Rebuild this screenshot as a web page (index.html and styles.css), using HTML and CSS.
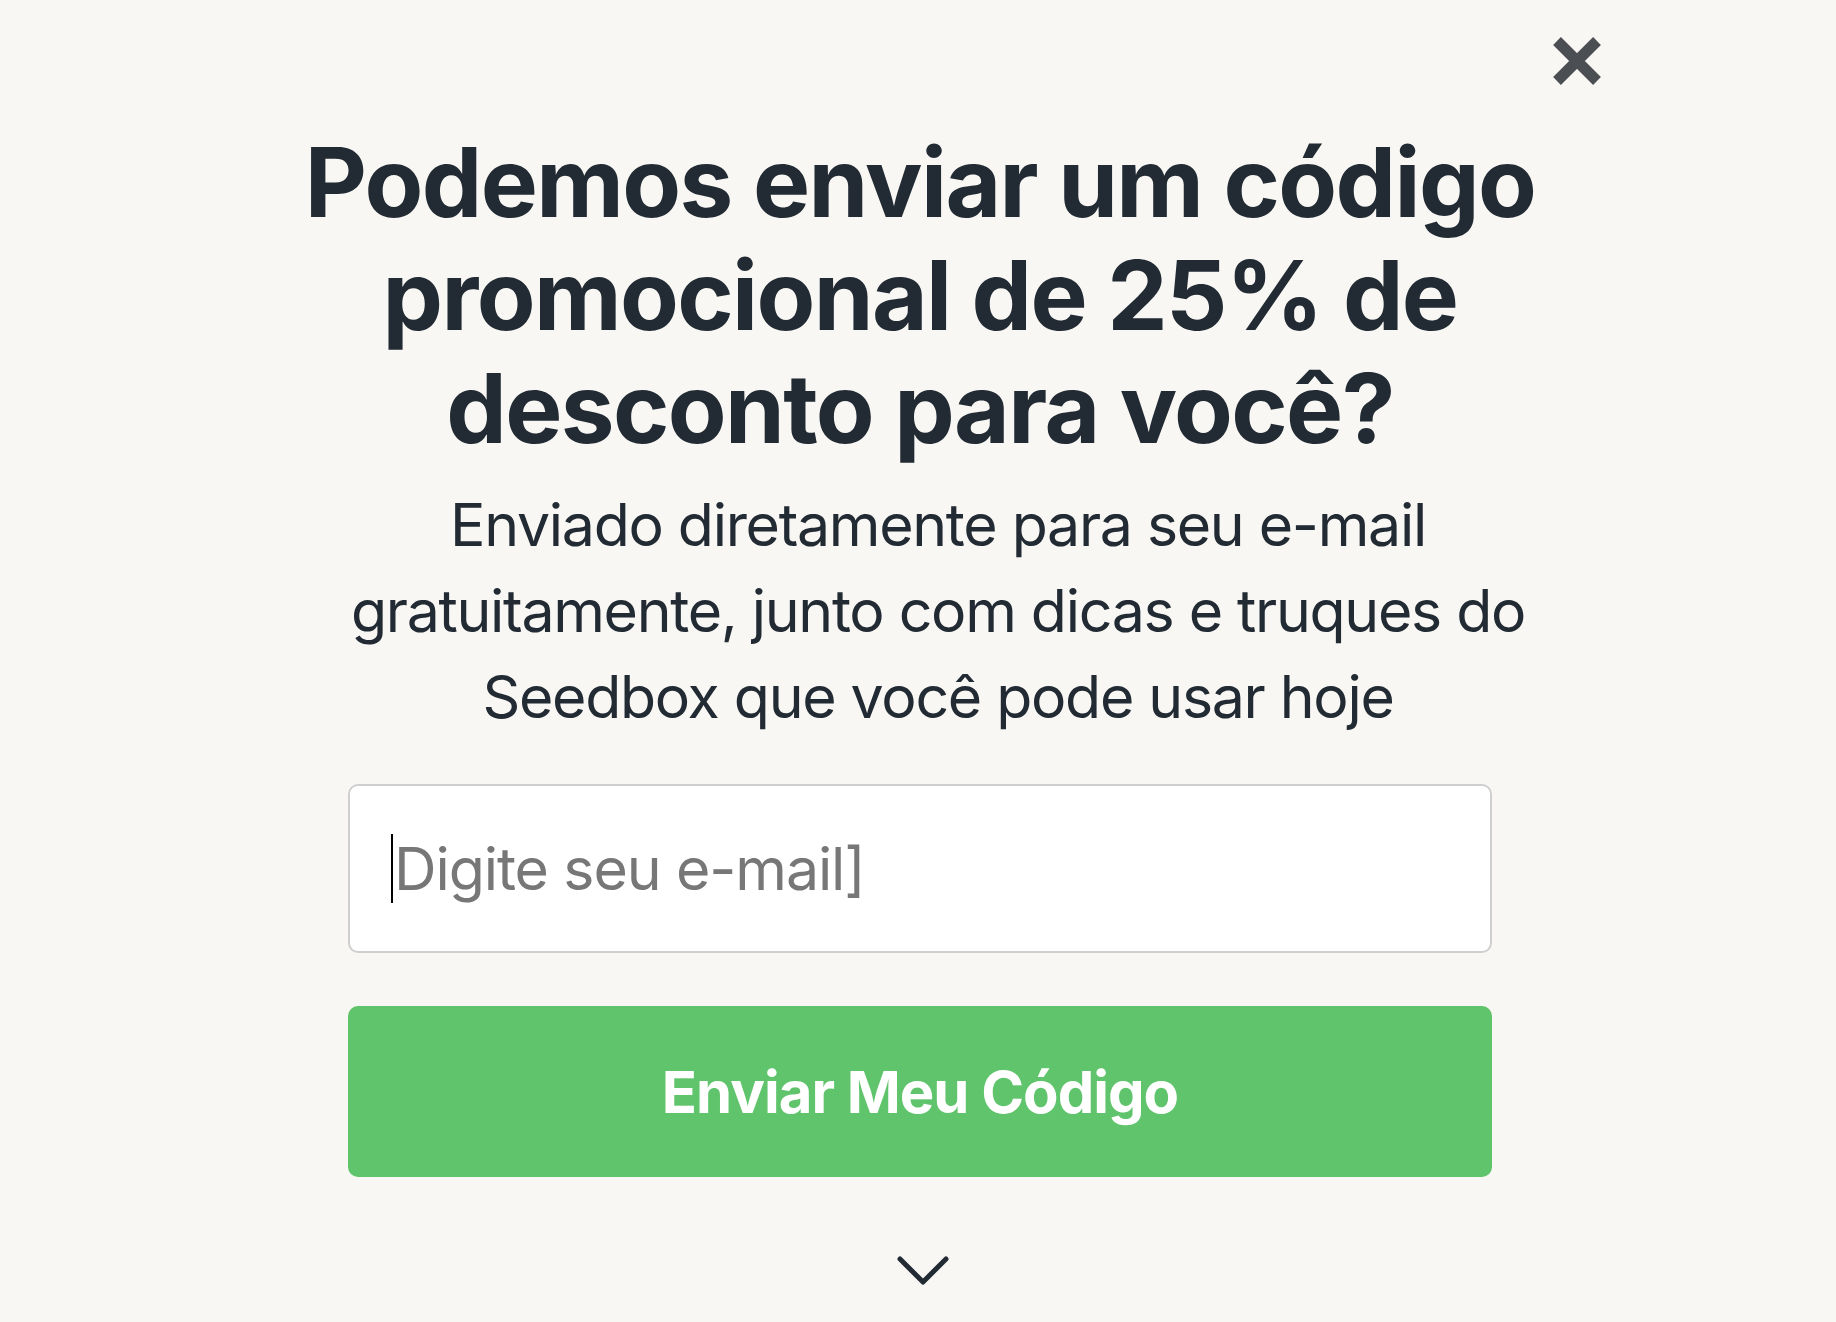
FILE: index.html
```html
<!DOCTYPE html>
<html lang="pt-BR">
<head>
  <meta charset="UTF-8" />
  <meta name="viewport" content="width=device-width, initial-scale=1.0" />
  <title>Seedbox - Código promocional</title>
  <link rel="stylesheet" href="styles.css">
</head>

<body>
  <button class="close" aria-label="Fechar">
    <svg viewBox="0 0 48 48" width="48" height="48">
      <path d="M4 4 L44 44 M44 4 L4 44" stroke="#4b4e53" stroke-width="11" fill="none" />
    </svg>
  </button>

  <div class="popup">
    <h1>Podemos enviar um código promocional de 25% de desconto para você?</h1>
    <p class="lead">Enviado diretamente para seu e-mail gratuitamente, junto com dicas e truques do Seedbox que você pode usar hoje</p>

    <form class="signup" onsubmit="return false">
      <div class="field">
        <input type="email" placeholder="Digite seu e-mail]">
        <span class="caret"></span>
      </div>
      <button type="submit">Enviar Meu Código</button>
    </form>

    <div class="more">
      <svg viewBox="0 0 54 32" width="54" height="32">
        <path d="M4 4 L27 27 L50 4" stroke="#222a33" stroke-width="5" fill="none" stroke-linecap="round" stroke-linejoin="round" />
      </svg>
    </div>
  </div>
</body>
</html>
```

FILE: styles.css
```css
:root {
  --bg: #f8f7f3;
  --text: #222a33;
  --green: #5fc46b;
  --radius: 10px;
}

body {
  margin: 0;
  background: var(--bg);
  color: var(--text);
  font-family: 'Inter', 'Noto Sans', sans-serif;
}

/* Close */
.close {
  position: absolute;
  top: 37px;
  left: 1553px;
  padding: 0;
  border: none;
  background: none;
  cursor: pointer;
  line-height: 0;
}

/* Popup */
.popup {
  width: 1260px;
  margin: 0 auto;
  padding: 126px 0 0 4px;
  text-align: center;
}

.popup h1 {
  margin: 0;
  font-size: 96px;
  line-height: 113px;
  font-weight: 700;
  letter-spacing: -1.6px;
}

.popup .lead {
  width: 1200px;
  margin: 17px auto 0;
  padding-left: 36px;
  font-size: 59px;
  line-height: 86px;
  font-weight: 400;
  letter-spacing: -1.3px;
}

/* Form */
.signup {
  width: 1144px;
  margin: 44px auto 0;
  display: flex;
  flex-direction: column;
  gap: 53px;
}

.field {
  position: relative;
}

.signup input {
  display: block;
  width: 100%;
  height: 169px;
  box-sizing: border-box;
  padding: 0 40px 0 44px;
  border: 2px solid #cfcfcf;
  border-radius: var(--radius);
  background: #fff;
  font-family: inherit;
  font-size: 59px;
  letter-spacing: -1.1px;
  color: var(--text);
  outline: none;
}

.signup input::placeholder {
  color: #777;
}

.caret {
  position: absolute;
  left: 43px;
  top: 50px;
  width: 2px;
  height: 69px;
  background: #000;
}

.signup button {
  height: 171px;
  border: none;
  border-radius: var(--radius);
  background: var(--green);
  color: #fff;
  font-family: inherit;
  font-size: 58px;
  font-weight: 700;
  letter-spacing: -1px;
  cursor: pointer;
}

.more {
  margin-top: 78px;
  padding-left: 6px;
  line-height: 0;
}
```
